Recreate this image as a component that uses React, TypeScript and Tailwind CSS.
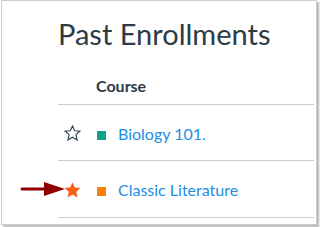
import React from "react";

const font = { fontFamily: "Lato, 'Open Sans', sans-serif" };

function Star({ filled }: { filled?: boolean }) {
  return (
    <svg width="17" height="16" viewBox="0 0 16 16" className="block">
      <polygon
        points="8,0.9 10.1,5.7 15.4,6.2 11.4,9.7 12.6,15 8,12.2 3.4,15 4.6,9.7 0.6,6.2 5.9,5.7"
        fill={filled ? "#fc5e13" : "none"}
        stroke={filled ? "#fc5e13" : "#2d3b45"}
        strokeWidth={filled ? 0.6 : 1.1}
        strokeLinejoin="miter"
      />
    </svg>
  );
}

const rows = [
  { name: "Biology 101.", color: "bg-[#13a08a]", fav: false, h: "h-[56px]" },
  { name: "Classic Literature", color: "bg-[#fc7f0a]", fav: true, h: "h-[57px]" },
];

export default function App() {
  return (
    <div className="w-[320px] h-[227px] bg-white overflow-hidden" style={font}>
      <div className="relative ml-[1px] w-[316px] h-[225px] bg-white border border-[#cdcdcd] shadow-[2px_2px_2px_rgba(0,0,0,0.3)] pl-[56px] pr-[2px]">
        <h1 className="mt-[16px] text-[29px] leading-[34px] font-normal text-[#2d3b45]">
          Past Enrollments
        </h1>
        <div className="mt-[25px] h-[29px] pl-[38px] border-b border-[#c7cdd1]">
          <span className="block text-[16px] leading-[20px] font-bold text-[#2d3b45]">Course</span>
        </div>
        {rows.map((r) => (
          <div key={r.name} className={`flex items-center ${r.h} border-b border-[#c7cdd1]`}>
            <div className="w-[39px] pl-[6px] pt-[1px]">
              <Star filled={r.fav} />
            </div>
            <span className={`w-[9px] h-[9px] mt-[5px] ${r.color}`} />
            <span className="ml-[12px] mt-[2px] text-[16px] leading-[22px] text-[#1e8fe1]">{r.name}</span>
          </div>
        ))}
        {/* annotation arrow */}
        <svg className="absolute left-[18px] top-[180px]" width="46" height="16" viewBox="0 0 46 16">
          <line x1="2" y1="8" x2="27" y2="8" stroke="#8f0000" strokeWidth="3" strokeLinecap="round" />
          <polygon points="24,1 45,8 24,15" fill="#8f0000" />
        </svg>
      </div>
    </div>
  );
}
